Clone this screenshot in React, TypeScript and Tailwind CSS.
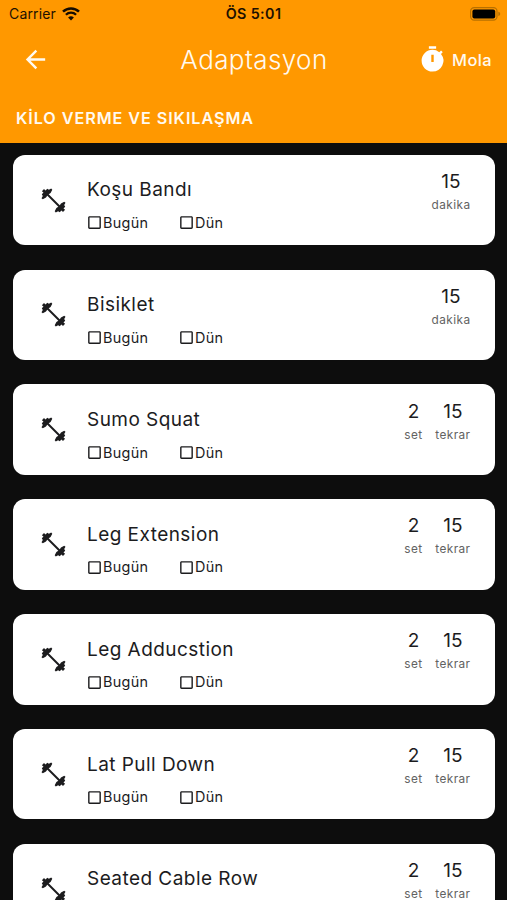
import React from "react";
import { MdArrowBack, MdCheckBoxOutlineBlank, MdTimer } from "react-icons/md";

type Metric = { value: string; unit: string };
type Exercise = { name: string; metrics: Metric[]; days?: string[] };

const minutes: Metric[] = [{ value: "15", unit: "dakika" }];
const sets: Metric[] = [
  { value: "2", unit: "set" },
  { value: "15", unit: "tekrar" },
];
const recentDays = ["Bugün", "Dün"];

const exercises: Exercise[] = [
  { name: "Koşu Bandı", metrics: minutes, days: recentDays },
  { name: "Bisiklet", metrics: minutes, days: recentDays },
  { name: "Sumo Squat", metrics: sets, days: recentDays },
  { name: "Leg Extension", metrics: sets, days: recentDays },
  { name: "Leg Adducstion", metrics: sets, days: recentDays },
  { name: "Lat Pull Down", metrics: sets, days: recentDays },
  { name: "Seated Cable Row", metrics: sets },
];

function WifiIcon() {
  return (
    <svg width="18" height="14" viewBox="0 0 18 14" fill="none" stroke="#150c00">
      <path d="M1 4.7a11.4 11.4 0 0 1 16 0" strokeWidth="2.5" />
      <path d="M3.9 7.8a7.3 7.3 0 0 1 10.2 0" strokeWidth="2.3" />
      <path d="M9 13.6L6.1 10.6a4.1 4.1 0 0 1 5.8 0z" fill="#150c00" stroke="none" />
    </svg>
  );
}

function BatteryIcon() {
  return (
    <svg width="31" height="14" viewBox="0 0 31 14">
      <rect x="0.6" y="0.6" width="26.4" height="12.6" rx="3.6" fill="none" stroke="#b87000" strokeWidth="1.2" />
      <rect x="2.4" y="2.4" width="22.8" height="9" rx="2" fill="#000" />
      <path d="M28.3 4.8c1.2.4 1.9 1.2 1.9 2.1s-.7 1.7-1.9 2.1z" fill="#b87000" />
    </svg>
  );
}

// One weight plate with notched edges; the second end is the same shape turned by 180 degrees.
const plate =
  "M0.9 3.2L3 1.1L4.5 2.5L6.3 0.8L7.9 1.8L10.2 0.5L11.3 1.8L9.6 5L7.7 6.2L6.2 7.7L5 9.6L1.8 11.3L0.5 10.2L1.8 7.9L0.8 6.3L2.5 4.5Z";

function BarbellIcon() {
  return (
    <svg width="25" height="25" viewBox="0 0 25 25" fill="#1c1c1e">
      <path d="M5 5L20 20" stroke="#1c1c1e" strokeWidth="2" />
      <path d={plate} />
      <path d={plate} transform="rotate(180 12.5 12.5)" />
    </svg>
  );
}

function StatusBar() {
  return (
    <div className="grid h-[27px] grid-cols-3 items-center pr-[6px] pl-[9px] text-[14px] text-[#1d1100]">
      <div className="flex items-center gap-[6px]">
        <span className="tracking-[0.15px]">Carrier</span>
        <WifiIcon />
      </div>
      <span className="-ml-[3px] text-center text-[14.3px] font-semibold tracking-[0.4px]">ÖS 5:01</span>
      <div className="flex justify-end">
        <BatteryIcon />
      </div>
    </div>
  );
}

function DayCheck({ label }: { label: string }) {
  return (
    <div className="flex w-[92px] items-center text-[#1c1c1e]">
      <MdCheckBoxOutlineBlank size={17} className="shrink-0" />
      <span className="text-[14.4px] leading-[18px] tracking-[0.3px]">{label}</span>
    </div>
  );
}

function ExerciseCard({ name, metrics, days }: Exercise) {
  return (
    <div className="flex h-[90.5px] shrink-0 rounded-[12px] bg-white pr-[24px] pl-[28px]">
      <div className="flex items-center">
        <BarbellIcon />
      </div>
      <div className="ml-[21px] flex flex-1 flex-col pt-[22.6px]">
        <div className="text-[19px] leading-[26px] tracking-[0.45px] whitespace-nowrap text-[#1c1c1e]">{name}</div>
        {days && (
          <div className="mt-[10.6px] -ml-[1px] flex">
            {days.map((day) => (
              <DayCheck key={day} label={day} />
            ))}
          </div>
        )}
      </div>
      <div className="flex gap-[12.5px] pt-[14.2px]">
        {metrics.map((m) => (
          <div key={m.unit} className="flex flex-col items-center">
            <span className="text-[19px] leading-[26px] text-[#1c1c1e]">{m.value}</span>
            <span className="mt-[2px] text-[11.8px] leading-[16px] tracking-[0.45px] text-[#626262]">{m.unit}</span>
          </div>
        ))}
      </div>
    </div>
  );
}

export default function App() {
  return (
    <div className="flex h-[900px] w-[507px] flex-col overflow-hidden bg-[#0d0d0d] font-['Inter',sans-serif]">
      <header className="h-[142.5px] shrink-0 bg-[#ff9800]">
        <StatusBar />
        <div className="grid h-[66px] grid-cols-[130px_1fr_130px] items-center text-[#fffaf0]">
          <MdArrowBack size={29} className="-mt-[1px] ml-[21px]" />
          <h1 className="pl-[1px] text-center text-[26px] leading-[32px] font-light tracking-[0.4px]">Adaptasyon</h1>
          <div className="flex items-center justify-end gap-[5px] pr-[15px]">
            <MdTimer size={29} className="-mt-[2px] text-white" />
            <span className="text-[16.4px] leading-[24px] font-medium tracking-[0.4px]">Mola</span>
          </div>
        </div>
        <div className="pt-[14px] pl-[16px] text-[16.2px] leading-[22px] font-semibold tracking-[0.93px] text-[#fffaf0]">
          KİLO VERME VE SIKILAŞMA
        </div>
      </header>
      <main className="flex flex-col gap-[24.33px] pt-[12.3px] pr-[12.5px] pl-[13px]">
        {exercises.map((e) => (
          <ExerciseCard key={e.name} {...e} />
        ))}
      </main>
    </div>
  );
}
